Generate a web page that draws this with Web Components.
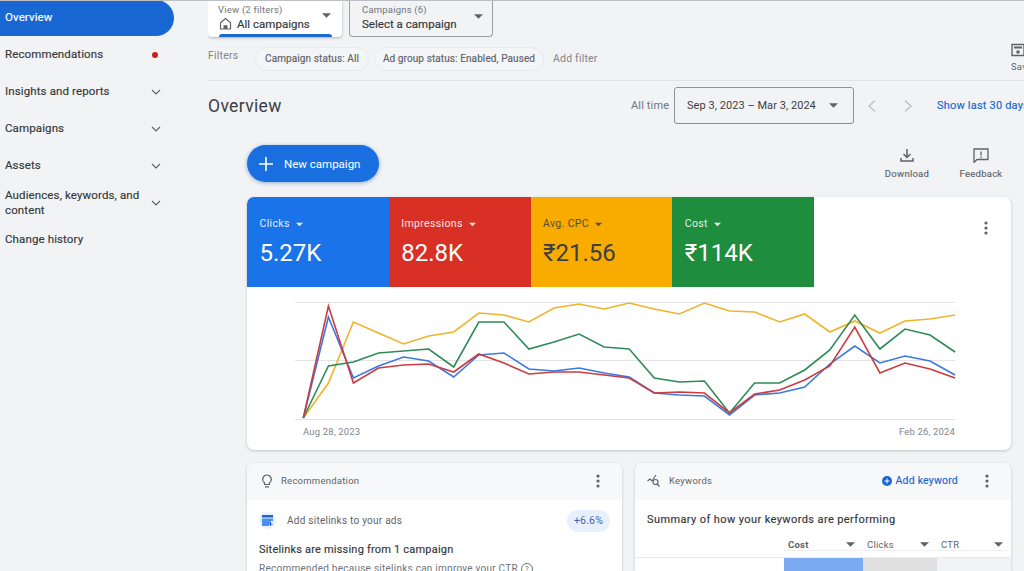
<!DOCTYPE html>
<html lang="en"><head><meta charset="utf-8"><title>Overview</title>
<style>
html,body{margin:0;padding:0;height:571px;overflow:hidden;background:#f2f3f5;font-family:Roboto,"Liberation Sans",sans-serif;color:#3c4043}
</style></head><body>
<ad-app>
  <ad-sidebar slot="side">
    <nav-item active>Overview</nav-item>
    <nav-item dot>Recommendations</nav-item>
    <nav-item chev>Insights and reports</nav-item>
    <nav-item chev>Campaigns</nav-item>
    <nav-item chev>Assets</nav-item>
    <nav-item chev tall>Audiences, keywords, and content</nav-item>
    <nav-item>Change history</nav-item>
  </ad-sidebar>
  <ad-selectors></ad-selectors>
  <ad-filters></ad-filters>
  <ad-titlebar></ad-titlebar>
  <ad-actions></ad-actions>
  <ad-perf></ad-perf>
  <ad-lower></ad-lower>
</ad-app>
<script>
const el=(name,css,html,extra)=>{customElements.define(name,class extends HTMLElement{
  constructor(){super();this.attachShadow({mode:'open'}).innerHTML='<style>'+css+'</style>'+(typeof html==='function'?html(this):html);}
  connectedCallback(){extra&&extra(this)}
});};
const caret=(c='#5f6368',w=10)=>`<svg width="${w}" height="5" viewBox="0 0 10 5" style="flex:none"><path d="M0 0h10L5 5z" fill="${c}"/></svg>`;
const dots=`<svg width="4" height="14" viewBox="0 0 4 14" style="flex:none"><g fill="#5f6368"><circle cx="2" cy="2" r="1.6"/><circle cx="2" cy="7" r="1.6"/><circle cx="2" cy="12" r="1.6"/></g></svg>`;

el('ad-app',`:host{display:grid;grid-template-columns:208px 816px;grid-template-rows:auto;width:1024px;height:571px;overflow:hidden;border-top:1px solid #bdbfc2;box-sizing:border-box}
.m{display:block;min-width:0;overflow:hidden;height:570px}`,
`<slot name="side"></slot><div class="m"><slot></slot></div>`);

el('ad-sidebar',`:host{display:block;font-size:11.5px;margin-top:-1px}`,`<slot></slot>`);

el('nav-item',`:host{display:flex;align-items:center;box-sizing:border-box;width:174px;height:37px;padding:0 13px 2px 5px;font-size:11.5px;line-height:15px;letter-spacing:.12px;color:#34373a;font-weight:400;-webkit-text-stroke:.15px currentColor}
:host([active]){background:#1967d2;color:#fff;border-radius:0 18px 18px 0;height:36px;margin-bottom:1px}
.t{flex:1}.d{width:6px;height:6px;border-radius:50%;background:#d0201c;margin-right:3px}
svg{flex:none}`,
h=>`<span class="t"><slot></slot></span>`+(h.hasAttribute('dot')?'<span class="d"></span>':'')+(h.hasAttribute('chev')?'<svg width="10" height="6" viewBox="0 0 10 6"><path d="M1 1l4 4 4-4" fill="none" stroke="#5f6368" stroke-width="1.2"/></svg>':''));

el('ad-selectors',`:host{display:flex;gap:7px;height:36px;font-size:11.5px;letter-spacing:.02px}
.b{box-sizing:border-box;height:36px;display:flex;align-items:center;position:relative}
.a{width:134px;background:#fff;border-radius:0 0 4px 4px;box-shadow:0 1px 3px rgba(60,64,67,.35);padding:0 11px 4px 10px}
.c{width:144px;border:1px solid #9aa0a6;border-top:0;border-radius:0 0 4px 4px;padding:0 9px 2px 12px}
.x{flex:1;display:flex;flex-direction:column;gap:1px}
small{font-size:9.5px;color:#70757a;line-height:12px;letter-spacing:.2px}
.v{line-height:14px;color:#34373a;display:flex;align-items:center;gap:5px;-webkit-text-stroke:.15px currentColor}
.bar{position:absolute;left:11px;right:10px;bottom:0;height:3px;background:#1967d2;border-radius:3px 3px 0 0}
.cr{margin-bottom:6px}`,
`<div class="b a"><div class="x"><small>View (2 filters)</small><div class="v"><svg width="13" height="13" viewBox="0 0 13 13" style="margin-left:1px"><path d="M1.500 5.800L6.500 1.500l5 4.300V12h-10z" fill="none" stroke="#5f6368" stroke-width="1.2"/><path d="M4.500 12V8.200h4V12z" fill="#5f6368"/></svg>All campaigns</div></div><span class="cr">${caret('#5f6368',9)}</span><i class="bar"></i></div>
<div class="b c"><div class="x"><small>Campaigns (6)</small><div class="v">Select a campaign</div></div><span class="cr">${caret('#5f6368',9)}</span></div>`);

el('ad-filters',`:host{display:flex;align-items:center;height:44px;border-bottom:1px solid #e0e2e5;box-sizing:border-box;font-size:10.5px;letter-spacing:.2px;color:#5f6368;white-space:nowrap;position:relative}
.f{width:47px;color:#80868b;margin-top:-6px;font-weight:400}
.chip{height:24px;display:flex;align-items:center;justify-content:center;border:1px solid #e8eaed;border-radius:12px;margin-right:5px;background:#f4f5f7;box-sizing:border-box;color:#5f6368;-webkit-text-stroke:.15px currentColor;font-size:10px;letter-spacing:.1px}
.add{margin-left:4px;color:#80868b}
.s{margin-left:auto;width:13px;display:flex;flex-direction:column;align-items:flex-start;gap:4px;overflow:visible;font-size:9.5px;margin-top:-2px}`,
`<span class="f">Filters</span><span class="chip" style="width:114px">Campaign status: All</span><span class="chip" style="width:170px">Ad group status: Enabled, Paused</span><span class="add">Add filter</span>
<span class="s"><svg width="13" height="14" viewBox="0 0 13 14"><path d="M1 1.500h12v11H1z" fill="none" stroke="#5f6368" stroke-width="1.4"/><rect x="3" y="3.500" width="8" height="2" fill="#5f6368"/><circle cx="7" cy="9" r="1.800" fill="#5f6368"/></svg><span>Save</span></span>`);

el('ad-titlebar',`:host{display:flex;align-items:center;height:49px;white-space:nowrap;box-sizing:border-box}
:host>*{flex:none}
h1{font:400 17.5px Roboto,sans-serif;letter-spacing:.35px;color:#3c4043;margin:0;width:423px;flex:none}
.at{font-size:11px;color:#70757a;width:43px;letter-spacing:.15px;flex:none}
.d{flex:none;box-sizing:border-box;width:180px;height:37px;border:1px solid #8d9196;border-radius:3px;display:flex;align-items:center;justify-content:space-between;padding:0 15px 0 12px;font-size:11px;letter-spacing:.05px;color:#3c4043}
.n{flex:none;display:flex;gap:26px;margin:0 0 0 13px;width:70px}
a{flex:none;color:#1a66d0;font-size:11px;letter-spacing:.2px;-webkit-text-stroke:.15px currentColor}`,
`<h1>Overview</h1><span class="at">All time</span><div class="d"><span>Sep 3, 2023 – Mar 3, 2024</span>${caret('#5f6368',9)}</div>
<div class="n"><svg width="10" height="14" viewBox="0 0 10 14"><path d="M8 1.500L2 7l6 5.500" fill="none" stroke="#bdc1c6" stroke-width="1.4"/></svg><svg width="10" height="14" viewBox="0 0 10 14"><path d="M2 1.500L8 7l-6 5.500" fill="none" stroke="#bdc1c6" stroke-width="1.4"/></svg></div><a>Show last 30 days</a>`);

el('ad-actions',`:host{display:flex;align-items:flex-start;height:67px;padding:15px 13px 0 39px;box-sizing:border-box;font-size:9.5px;letter-spacing:.25px;color:#5f6368}
.new{box-sizing:border-box;width:132px;height:37px;border-radius:19px;background:#1a6fe0;color:#fff;display:flex;align-items:center;gap:11px;padding-left:12px;font-size:11.5px;letter-spacing:0;box-shadow:0 1px 4px rgba(26,80,170,.45)}
.sp{flex:1}
.i{display:flex;flex-direction:column;align-items:center;gap:5px;margin-top:3px;-webkit-text-stroke:.12px currentColor}`,
`<div class="new"><svg width="14" height="14" viewBox="0 0 14 14"><path d="M7 0v14M0 7h14" stroke="#fff" stroke-width="1.6"/></svg><span>New campaign</span></div><span class="sp"></span>
<div class="i" style="width:60px;margin-right:14px"><svg width="14" height="15" viewBox="0 0 14 15"><path d="M7 1v8M3.500 6L7 9.500 10.500 6M1 10v3h12v-3" fill="none" stroke="#5f6368" stroke-width="1.5"/></svg><span>Download</span></div>
<div class="i" style="width:60px"><svg width="16" height="15" viewBox="0 0 16 15"><path d="M1 1h14v10.500H4L1 14.500z" fill="none" stroke="#5f6368" stroke-width="1.3"/><path d="M8 3.500v4M8 8.500v1.500" stroke="#5f6368" stroke-width="1.3"/></svg><span>Feedback</span></div>`);

el('metric-tile',`:host{display:block;box-sizing:border-box;width:141.75px;height:90px;padding:20px 0 0 12.5px;background:var(--bg);color:var(--fg)}
.l{display:flex;align-items:center;gap:6px;font-size:10.5px;letter-spacing:.35px;line-height:14px;height:14px;opacity:.88}
.v{font-size:24px;line-height:28px;margin-top:8px;letter-spacing:0}`,
h=>`<div class="l"><span>${h.getAttribute('label')}</span>${caret(h.getAttribute('fg'),7)}</div><div class="v">${h.getAttribute('value')}</div>`,
h=>{h.style.setProperty('--bg',h.getAttribute('bg'));h.style.setProperty('--fg',h.getAttribute('fg'))});

const S={y:[418,383,322,333,344,336,332,313,315,322,308,304,309,303,309,314,303,311,312,322,314,332,321,333,321,319,315],
g:[418,366,362,353,351,349,367,322,322,349,342,334,347,349,378,382,381,413,383,383,370,350,315,349,329,335,352],
b:[418,317,378,366,357,361,377,355,353,369,371,368,373,377,393,395,396,415,395,393,387,364,346,363,356,361,375],
r:[418,306,383,368,365,364,372,354,363,374,372,372,375,378,393,392,393,413,394,390,380,366,327,373,363,369,378]};
const pts=a=>a.map((y,i)=>(56.3+i*25.07).toFixed(1)+','+(y-287)).join(' ');
el('ad-perf',`:host{display:block;margin:0 13px 13px 39px;width:764px;height:253px;background:#fff;border-radius:7px;box-shadow:0 1px 3px rgba(60,64,67,.28);overflow:hidden}
.top{display:flex;height:90px}
.more{margin-left:auto;padding:23px 23px 0 0}
svg.c{display:block;height:134px;width:764px}
.x{display:flex;justify-content:space-between;padding:5px 56px 0 56px;font-size:9.5px;letter-spacing:.15px;color:#80868b}`,
`<div class="top"><metric-tile label="Clicks" value="5.27K" bg="#1a73e8" fg="#fff"></metric-tile><metric-tile label="Impressions" value="82.8K" bg="#d93025" fg="#fff"></metric-tile><metric-tile label="Avg. CPC" value="₹21.56" bg="#f9ab00" fg="#3c4043"></metric-tile><metric-tile label="Cost" value="₹114K" bg="#1e8e3e" fg="#fff"></metric-tile><div class="more">${dots}</div></div>
<svg class="c" viewBox="0 0 764 134"><g stroke="#e3e4e6" stroke-width="1"><path d="M48 15.500H708M48 73.500H708M48 132.500H708"/></g>
<g fill="none" stroke-width="1.600" stroke-linejoin="miter">
<polyline points="${pts(S.y)}" stroke="#f0b429"/><polyline points="${pts(S.g)}" stroke="#2e8b57"/><polyline points="${pts(S.b)}" stroke="#3b78e0"/><polyline points="${pts(S.r)}" stroke="#cc3b3f"/></g></svg>
<div class="x"><span>Aug 28, 2023</span><span>Feb 26, 2024</span></div>`);

el('ad-card',`:host{display:block;box-sizing:border-box;background:#fff;border-radius:7px 7px 0 0;box-shadow:0 1px 3px rgba(60,64,67,.28);height:108px;overflow:hidden}
.h{height:37px;box-sizing:border-box;background:#f7f8fa;display:flex;align-items:center;gap:8px;padding:0 22px 2px 14px;font-size:9.5px;letter-spacing:.25px;color:#5f6368}
.h span{flex:1}`,
`<div class="h"><slot name="icon"></slot><span><slot name="title"></slot></span><slot name="act"></slot>${dots}</div><slot></slot>`);

el('rec-body',`:host{display:block;padding:8px 12px 0 12px}
.r{display:flex;align-items:center;gap:8px;height:25px;font-size:10px;letter-spacing:.25px;color:#5f6368}
.r span{flex:1}
.ic{width:17px;height:17px;border-radius:50%;background:#e8f0fe;display:flex;align-items:center;justify-content:center;margin-right:3px}
.p{height:22px;width:43px;border-radius:11px;background:#e8f0fe;color:#3c63b8;font-size:10.500px;display:flex;align-items:center;justify-content:center;letter-spacing:.2px}
h3{margin:9px 0 0;font:400 11px/15px Roboto,sans-serif;letter-spacing:.2px;color:#34373a;-webkit-text-stroke:.15px currentColor}
p{margin:5px 0 0;font-size:10px;line-height:13px;letter-spacing:.25px;color:#70757a;white-space:nowrap;display:flex;align-items:center;gap:3px}
.q{width:10px;height:10px;border:1px solid #70757a;border-radius:50%;font-size:8px;line-height:10px;text-align:center;letter-spacing:0}`,
`<div class="r"><div class="ic"><svg width="11" height="11" viewBox="0 0 11 11"><path d="M0 0h11v2.500H0z" fill="#1a66d0"/><path d="M0 3.500h11V6H8.500v2H7V11H0z" fill="#4d8cf0"/><path d="M9 7v1.500h1.500v1H9V11H8V9.500H6.500v-1H8V7z" fill="#1a66d0"/></svg></div><span>Add sitelinks to your ads</span><div class="p">+6.6%</div></div>
<h3>Sitelinks are missing from 1 campaign</h3>
<p>Recommended because sitelinks can improve your CTR <span class="q">?</span></p>`);

el('kw-body',`:host{display:block}
h3{margin:0;padding:12px 12px 0;font:400 11px/15px Roboto,sans-serif;letter-spacing:.4px;color:#34373a;height:20px;-webkit-text-stroke:.15px currentColor}
.row{display:grid;grid-template-columns:149px 79px 74px 74px;height:25px;margin-top:1px;font-size:9.5px;letter-spacing:.25px;color:#5f6368;border-bottom:1px solid #e8eaed;box-sizing:border-box}
.c{display:flex;align-items:center;justify-content:space-between;padding:0 6px 0 4px;height:13px;margin-top:5px;box-sizing:border-box;border-bottom:1px solid #eceef0;margin-right:2px}
b{font-weight:400}
.bar{display:grid;grid-template-columns:149px 79px 74px 74px;height:13px}
.bar i:nth-child(2){background:#7baaf0}.bar i:nth-child(3){background:#e0e0e0}.bar i:nth-child(4){background:#f1f3f4}`,
`<h3>Summary of how your keywords are performing</h3>
<div class="row"><span></span><div class="c"><b style="font-weight:700">Cost</b>${caret('#5f6368',9)}</div><div class="c"><b>Clicks</b>${caret('#5f6368',9)}</div><div class="c"><b>CTR</b>${caret('#5f6368',9)}</div></div>
<div class="bar"><i></i><i></i><i></i><i></i></div>`);

el('ad-lower',`:host{display:grid;grid-template-columns:375px 376px;gap:13px;padding:0 13px 0 39px}
a{color:#1a66d0;font-size:10.5px;display:flex;align-items:center;gap:4px;margin-right:19px;letter-spacing:.2px;-webkit-text-stroke:.15px currentColor}`,
`<ad-card><svg slot="icon" width="12" height="14" viewBox="0 0 12 14"><path d="M6 1a4.300 4.300 0 0 0-2.500 7.800V10.500h5V8.800A4.300 4.300 0 0 0 6 1zM4 12.800h4" fill="none" stroke="#5f6368" stroke-width="1.2"/></svg><span slot="title">Recommendation</span><rec-body></rec-body></ad-card>
<ad-card><svg slot="icon" width="14" height="13" viewBox="0 0 14 13" style="margin-left:-2px"><path d="M.5 7l2.500-2 2 2 4-6" fill="none" stroke="#5f6368" stroke-width="1.100"/><circle cx="8.500" cy="8" r="2.500" fill="none" stroke="#5f6368" stroke-width="1.200"/><path d="M10.300 10l2.200 2.500" stroke="#5f6368" stroke-width="1.300"/></svg><span slot="title">Keywords</span><a slot="act"><svg width="10" height="10" viewBox="0 0 10 10"><circle cx="5" cy="5" r="5" fill="#1a66d0"/><path d="M5 2.500v5M2.500 5h5" stroke="#fff"/></svg>Add keyword</a><kw-body></kw-body></ad-card>`);
</script>
</body></html>
